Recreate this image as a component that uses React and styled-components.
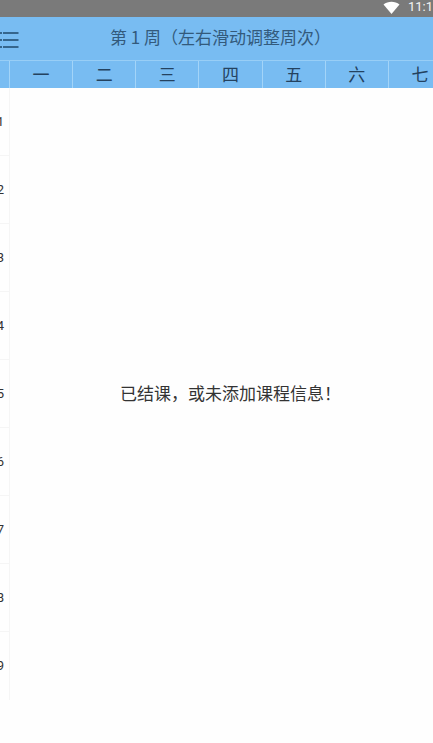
import styled, { createGlobalStyle } from 'styled-components';

const days = ['一', '二', '三', '四', '五', '六', '七'];
const lessons = [1, 2, 3, 4, 5, 6, 7, 8, 9];

const GlobalStyle = createGlobalStyle`
    * {
        box-sizing: border-box;
    }
    body {
        margin: 0;
        background: #fefefe;
        color: #333;
        font-family: Roboto, 'Noto Sans CJK SC', sans-serif;
    }
`;

const Page = styled.div`
    min-height: 100vh;
    overflow: hidden;
`;

const StatusBar = styled.div`
    display: flex;
    align-items: center;
    justify-content: flex-end;
    gap: 8px;
    height: 17px;
    padding-bottom: 3px;
    background: #7a7a7a;
    color: #f4f4f4;
    font-size: 13px;
    line-height: 16px;
    white-space: nowrap;
`;

const Header = styled.header`
    display: grid;
    grid-template-columns: 20px 1fr 12px;
    align-items: center;
    height: 43px;
    background: #78bcf2;
`;

const MenuButton = styled.button`
    display: flex;
    padding: 2px 0 0;
    border: 0;
    background: none;
    color: #35658c;
`;

const Title = styled.h1`
    margin: 0;
    padding-bottom: 4px;
    color: #335a7c;
    font-family: 'Noto Sans CJK SC', sans-serif;
    font-size: 17px;
    font-weight: 400;
    line-height: 24px;
    text-align: center;
    white-space: nowrap;
`;

/* the seventh day runs past the right edge of the screen */
const WeekRow = styled.div`
    display: grid;
    grid-template-columns: 9px repeat(7, 1fr);
    height: 28px;
    margin-right: -18px;
    border-top: 1px solid #98cef6;
    background: #78bcf2;
`;

const Day = styled.div`
    display: flex;
    align-items: center;
    justify-content: center;
    padding-bottom: 2px;
    border-left: 1px solid #a3d4f8;
    color: #24425f;
    font-family: 'Noto Sans CJK SC', sans-serif;
    font-size: 17px;
    line-height: 24px;
`;

const Board = styled.main`
    display: grid;
    grid-template-columns: 10px 1fr;
    margin-right: -18px;
`;

const Lessons = styled.ol`
    margin: 0;
    padding: 0;
    border-right: 1px solid #f5f5f5;
    list-style: none;
`;

const Lesson = styled.li`
    display: flex;
    align-items: center;
    justify-content: flex-end;
    height: 68px;
    padding-right: 5px;
    border-bottom: 1px solid #f5f5f5;
    font-size: 13px;
    line-height: 16px;
    &:last-child {
        border-bottom: 0;
    }
`;

const Empty = styled.p`
    align-self: center;
    margin: 0;
    padding-bottom: 2px;
    font-family: 'Noto Sans CJK SC', sans-serif;
    font-size: 17px;
    line-height: 24px;
    text-align: center;
`;

const App = () => {
    return (
        <Page>
            <GlobalStyle />
            <StatusBar>
                <svg width="17" height="13" viewBox="0 0 17 13" fill="#fff">
                    <path d="M0.5 3.5C5 -0.2 12 -0.2 16.5 3.5L8.5 13z" />
                </svg>
                <span>11:1</span>
            </StatusBar>
            <Header>
                <MenuButton type="button" aria-label="菜单">
                    <svg
                        width="19"
                        height="16"
                        viewBox="0 0 19 16"
                        stroke="currentColor"
                        strokeWidth="2"
                    >
                        <path d="M0 1h2M3 1h15.500M0 8h2M3 8h15.500M0 15h2M3 15h15.500" />
                    </svg>
                </MenuButton>
                <Title>第 1 周（左右滑动调整周次）</Title>
            </Header>
            <WeekRow>
                <span />
                {days.map((day) => (
                    <Day key={day}>{day}</Day>
                ))}
            </WeekRow>
            <Board>
                <Lessons>
                    {lessons.map((lesson) => (
                        <Lesson key={lesson}>{lesson}</Lesson>
                    ))}
                </Lessons>
                <Empty>已结课，或未添加课程信息！</Empty>
            </Board>
        </Page>
    );
};

export default App;
